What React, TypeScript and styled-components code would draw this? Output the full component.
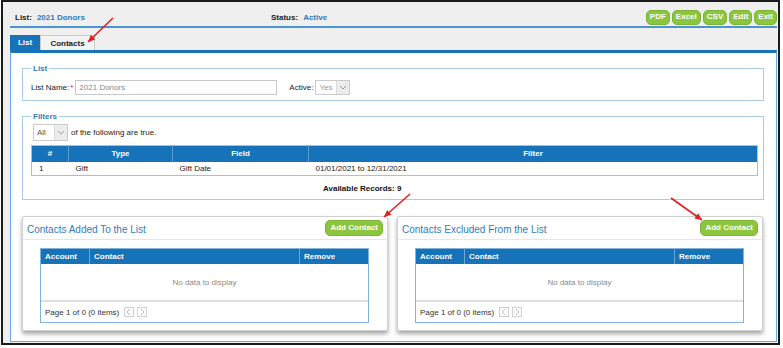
import React from 'react';
import styled, { createGlobalStyle } from 'styled-components';

const GlobalStyle = createGlobalStyle`
  html, body {
    margin: 0;
    padding: 0;
    background: #ffffff;
  }
  body {
    font-family: 'Liberation Sans', Arial, sans-serif;
    font-size: 8px;
    color: #222;
  }
  * {
    box-sizing: border-box;
  }
`;

const BLUE = '#1672b9';
const LINK = '#2b7cc3';
const GREEN = '#8cc63f';

/* page shell */
const Page = styled.div`
  position: relative;
  width: 783px;
  height: 348px;
  padding-left: 1px;
`;

const Frame = styled.div`
  width: 779px;
  height: 345px;
  border: 2px solid #1b1b1b;
  background: #efefef;
  display: flex;
  flex-direction: column;
`;

/* top header bar */
const Header = styled.div`
  height: 26px;
  margin: 0 1px 0 7px;
  padding: 6px 0 0 5px;
  border-bottom: 2px solid #4a94d0;
  display: flex;
  align-items: center;
`;

const HeaderField = styled.div<{ $width?: number }>`
  display: flex;
  gap: 5px;
  font-weight: bold;
  font-size: 8px;
  width: ${(p) => (p.$width ? `${p.$width}px` : 'auto')};
`;

const HeaderValue = styled.span`
  color: ${LINK};
`;

const ButtonGroup = styled.div`
  margin-left: auto;
  display: flex;
  gap: 2px;
`;

const GreenButton = styled.button<{ $h?: number; $px?: number }>`
  height: ${(p) => p.$h ?? 15}px;
  padding: 0 ${(p) => p.$px ?? 3}px;
  border: 1px solid #7db437;
  border-radius: 5px;
  background: ${GREEN};
  color: #fff;
  font-family: 'Liberation Sans', Arial, sans-serif;
  font-weight: bold;
  font-size: 8px;
  line-height: 1;
  cursor: pointer;
`;

/* tabs */
const TabRow = styled.div`
  display: flex;
  margin: 7px 0 0 7px;
  height: 15px;
`;

const Tab = styled.div<{ $active?: boolean; $width: number }>`
  width: ${(p) => p.$width}px;
  display: flex;
  align-items: center;
  justify-content: center;
  font-weight: bold;
  font-size: 8px;
  background: ${(p) => (p.$active ? BLUE : '#f3f3f3')};
  color: ${(p) => (p.$active ? '#fff' : '#222')};
  border: ${(p) => (p.$active ? 'none' : '1px solid #cacaca')};
  border-bottom: none;
`;

/* main panel */
const Panel = styled.div`
  flex: 1;
  margin: 0 1px 1px 7px;
  background: #fff;
  border: 1px solid #69abe0;
  border-top: 3px solid ${BLUE};
  padding: 10px 12px 0 11px;
`;

const FieldSet = styled.fieldset<{ $mt?: number; $pt?: number }>`
  margin: ${(p) => p.$mt ?? 0}px 0 0 0;
  border: 1px solid #a9cce8;
  padding: ${(p) => p.$pt ?? 6}px 4px 5px 8px;
  min-width: 0;
`;

const Legend = styled.legend`
  padding: 0 2px;
  font-weight: bold;
  font-size: 8px;
  line-height: 11px;
  color: #2d7fc6;
`;

const FormRow = styled.div`
  display: flex;
  align-items: center;
  height: 15px;
  font-size: 8px;
  color: #222;
`;

const Required = styled.span`
  color: #d42020;
  margin-left: 1px;
`;

const FieldLabel = styled.span<{ $ml?: number }>`
  margin-left: ${(p) => p.$ml ?? 0}px;
`;

const TextInput = styled.div<{ $width: number; $ml: number }>`
  width: ${(p) => p.$width}px;
  height: 15px;
  margin-left: ${(p) => p.$ml}px;
  border: 1px solid #c8c8c8;
  background: #fff;
  color: #8a8a8a;
  font-size: 8px;
  display: flex;
  align-items: center;
  padding-left: 3px;
`;

const Select = styled.div<{ $width: number; $height: number; $ml: number; $muted?: boolean }>`
  width: ${(p) => p.$width}px;
  height: ${(p) => p.$height}px;
  margin-left: ${(p) => p.$ml}px;
  border: 1px solid #cbcbcb;
  background: #fff;
  display: flex;
  align-items: stretch;
  color: ${(p) => (p.$muted ? '#9a9a9a' : '#555')};
  font-size: 8px;
  flex-shrink: 0;
`;

const SelectText = styled.span`
  flex: 1;
  display: flex;
  align-items: center;
  padding-left: 3px;
`;

const SelectArrow = styled.span`
  width: 13px;
  display: flex;
  align-items: center;
  justify-content: center;
  background: #ececec;
  border-left: 1px solid #dcdcdc;
`;

const Chevron = ({ dir = 'down', color = '#9a9a9a' }: { dir?: 'down' | 'left' | 'right'; color?: string }) => {
  const pts = dir === 'down' ? '1,2 4,5 7,2' : dir === 'left' ? '5,1 2,4 5,7' : '3,1 6,4 3,7';
  return (
    <svg width="8" height="8" viewBox="0 0 8 8">
      <polyline points={pts} fill="none" stroke={color} strokeWidth="1" />
    </svg>
  );
};

const FilterLine = styled.div`
  display: flex;
  align-items: center;
  height: 17px;
  margin-top: 2px;
  font-size: 8px;
  color: #222;
  gap: 3px;
`;

/* filter table */
const FilterTable = styled.table`
  width: 727px;
  margin-top: 4px;
  border-collapse: collapse;
  border: 1px solid #9cc3e3;
  font-size: 8px;
`;

const Th = styled.th<{ $width?: number }>`
  width: ${(p) => (p.$width ? `${p.$width}px` : 'auto')};
  height: 16px;
  padding: 0;
  background: ${BLUE};
  color: #fff;
  font-weight: bold;
  text-align: center;
  border-left: 1px solid #5b9bd0;
  &:first-child {
    border-left: none;
  }
`;

const Td = styled.td`
  height: 14px;
  padding: 0 0 0 7px;
  color: #222;
  background: #fff;
`;

const Records = styled.div`
  margin-top: 7px;
  padding-left: 292px;
  font-weight: bold;
  font-size: 8px;
  line-height: 11px;
  color: #111;
`;

/* contact cards */
const CardRow = styled.div`
  display: flex;
  gap: 9px;
  margin-top: 16px;
`;

const Card = styled.div`
  width: 366px;
  background: #fff;
  border: 1px solid #d0d0d0;
  border-radius: 2px;
  box-shadow: 0 3px 4px rgba(0, 0, 0, 0.35);
`;

const CardHeader = styled.div`
  height: 23px;
  border-bottom: 1px solid #e6e6e6;
  display: flex;
  align-items: center;
  justify-content: space-between;
  padding: 0 4px 0 4px;
`;

const CardTitle = styled.div`
  font-size: 10px;
  color: #2f7cc2;
  padding-top: 2px;
`;

const Grid = styled.div`
  margin: 8px 18px 7px 17px;
  border: 1px solid #7fb3df;
`;

const GridHead = styled.div`
  display: grid;
  grid-template-columns: 48px 210px 1fr;
  height: 15px;
  background: ${BLUE};
`;

const GridHeadCell = styled.div`
  display: flex;
  align-items: center;
  padding-left: 4px;
  color: #fff;
  font-weight: bold;
  font-size: 8px;
  border-left: 1px solid #6aa6d8;
  &:first-child {
    border-left: none;
  }
`;

const GridEmpty = styled.div`
  height: 36px;
  display: flex;
  align-items: center;
  justify-content: center;
  color: #8a8a8a;
  font-size: 8px;
`;

const Pager = styled.div`
  height: 22px;
  border-top: 2px solid #dedede;
  display: flex;
  align-items: center;
  padding-left: 4px;
  gap: 3px;
  color: #333;
  font-size: 8px;
`;

const PagerButton = styled.span<{ $ml?: number }>`
  width: 10px;
  height: 10px;
  margin-left: ${(p) => p.$ml ?? 0}px;
  border: 1px solid #cfcfcf;
  display: flex;
  align-items: center;
  justify-content: center;
`;

/* red annotation arrows lying over the page */
const ArrowLayer = styled.svg`
  position: absolute;
  left: 0;
  top: 0;
  pointer-events: none;
`;

const arrows = [
  { x1: 113, y1: 18, x2: 88, y2: 42 },
  { x1: 410, y1: 194, x2: 384, y2: 217 },
  { x1: 671, y1: 198, x2: 702, y2: 220 },
];

const head = (a: { x1: number; y1: number; x2: number; y2: number }) => {
  const dx = a.x2 - a.x1;
  const dy = a.y2 - a.y1;
  const len = Math.hypot(dx, dy);
  const ux = dx / len;
  const uy = dy / len;
  const bx = a.x2 - ux * 7;
  const by = a.y2 - uy * 7;
  const px = -uy * 3.2;
  const py = ux * 3.2;
  return `${a.x2},${a.y2} ${bx + px},${by + py} ${bx - px},${by - py}`;
};

const ContactCard = ({ title }: { title: string }) => (
  <Card>
    <CardHeader>
      <CardTitle>{title}</CardTitle>
      <GreenButton $h={16} $px={4}>Add Contact</GreenButton>
    </CardHeader>
    <Grid>
      <GridHead>
        <GridHeadCell>Account</GridHeadCell>
        <GridHeadCell>Contact</GridHeadCell>
        <GridHeadCell>Remove</GridHeadCell>
      </GridHead>
      <GridEmpty>No data to display</GridEmpty>
      <Pager>
        Page 1 of 0 (0 items)
        <PagerButton $ml={2}>
          <Chevron dir="left" color="#bdbdbd" />
        </PagerButton>
        <PagerButton>
          <Chevron dir="right" color="#bdbdbd" />
        </PagerButton>
      </Pager>
    </Grid>
  </Card>
);

export default function App() {
  return (
    <Page>
      <GlobalStyle />
      <Frame>
        <Header>
          <HeaderField $width={256}>
            List: <HeaderValue>2021 Donors</HeaderValue>
          </HeaderField>
          <HeaderField>
            Status: <HeaderValue>Active</HeaderValue>
          </HeaderField>
          <ButtonGroup>
            <GreenButton>PDF</GreenButton>
            <GreenButton>Excel</GreenButton>
            <GreenButton>CSV</GreenButton>
            <GreenButton>Edit</GreenButton>
            <GreenButton>Exit</GreenButton>
          </ButtonGroup>
        </Header>
        <TabRow>
          <Tab $active $width={30}>List</Tab>
          <Tab $width={55}>Contacts</Tab>
        </TabRow>
        <Panel>
          <FieldSet>
            <Legend>List</Legend>
            <FormRow>
              List Name:<Required>*</Required>
              <TextInput $width={202} $ml={2}>2021 Donors</TextInput>
              <FieldLabel $ml={12}>Active:</FieldLabel>
              <Select $width={35} $height={15} $ml={2} $muted>
                <SelectText>Yes</SelectText>
                <SelectArrow>
                  <Chevron />
                </SelectArrow>
              </Select>
            </FormRow>
          </FieldSet>
          <FieldSet $mt={10} $pt={0}>
            <Legend>Filters</Legend>
            <FilterLine>
              <Select $width={35} $height={17} $ml={2}>
                <SelectText>All</SelectText>
                <SelectArrow>
                  <Chevron />
                </SelectArrow>
              </Select>
              of the following are true.
            </FilterLine>
            <FilterTable>
              <thead>
                <tr>
                  <Th $width={37}>#</Th>
                  <Th $width={104}>Type</Th>
                  <Th $width={136}>Field</Th>
                  <Th>Filter</Th>
                </tr>
              </thead>
              <tbody>
                <tr>
                  <Td>1</Td>
                  <Td>Gift</Td>
                  <Td>Gift Date</Td>
                  <Td>01/01/2021 to 12/31/2021</Td>
                </tr>
              </tbody>
            </FilterTable>
            <Records>Available Records: 9</Records>
          </FieldSet>
          <CardRow>
            <ContactCard title="Contacts Added To the List" />
            <ContactCard title="Contacts Excluded From the List" />
          </CardRow>
        </Panel>
      </Frame>
      <ArrowLayer width={783} height={348} viewBox="0 0 783 348">
        {arrows.map((a, i) => (
          <g key={i}>
            <line x1={a.x1} y1={a.y1} x2={a.x2} y2={a.y2} stroke="#e02020" strokeWidth="1.6" />
            <polygon points={head(a)} fill="#e02020" />
          </g>
        ))}
      </ArrowLayer>
    </Page>
  );
}
